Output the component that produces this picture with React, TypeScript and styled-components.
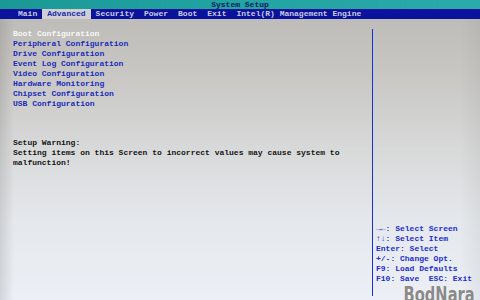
import React from "react";
import styled, { createGlobalStyle } from "styled-components";

const Global = createGlobalStyle`
  html, body { margin: 0; padding: 0; width: 480px; height: 300px; overflow: hidden; }
  body { font-family: "Liberation Mono", "DejaVu Sans Mono", monospace; }
`;

const Screen = styled.div`
  position: relative;
  width: 480px;
  height: 300px;
  overflow: hidden;
  display: flex;
  flex-direction: column;
  background:
    linear-gradient(to right, rgba(90, 90, 90, 0.18) 0px, rgba(90, 90, 90, 0) 14px, rgba(90, 90, 90, 0) 460px, rgba(90, 90, 90, 0.08) 480px),
    linear-gradient(to bottom, #bbb9b5 0%, #c8c7c4 25%, #d8d9d9 50%, #e4e7eb 72%, #ecf0f6 100%);
  font-family: "Liberation Mono", "DejaVu Sans Mono", monospace;
  font-size: 8px;
  font-weight: bold;
  line-height: 10px;
`;

const TitleBar = styled.div`
  height: 9px;
  display: flex;
  align-items: center;
  justify-content: center;
  background: linear-gradient(to right, #1a9896, #22a4a3 50%, #2aaaa9);
  color: #0c1a5c;
  line-height: 9px;
`;

const MenuBar = styled.div`
  height: 10px;
  display: flex;
  align-items: stretch;
  padding-left: 13px;
  background: #0b129c;
`;

const Tab = styled.div<{ $active?: boolean }>`
  padding: 0 5px;
  display: flex;
  align-items: center;
  color: ${(p) => (p.$active ? "#1a2aa8" : "#c9cbe6")};
  background: ${(p) => (p.$active ? "#cfcfd4" : "transparent")};
`;

const Body = styled.div`
  flex: 1;
  display: flex;
`;

const Main = styled.div`
  width: 359px;
  padding: 10px 0 0 13px;
  display: flex;
  flex-direction: column;
`;

const Item = styled.div<{ $selected?: boolean }>`
  color: ${(p) => (p.$selected ? "#f7f7f7" : "#1c2cba")};
  white-space: pre;
`;

const Warning = styled.div`
  margin-top: 29px;
  color: #151515;
  white-space: pre;
`;

const Divider = styled.div`
  width: 1px;
  margin-top: 10px;
  margin-bottom: 4px;
  background: #1c2ed6;
`;

const Help = styled.div`
  flex: 1;
  display: flex;
  flex-direction: column;
  justify-content: flex-end;
  padding: 0 0 16px 3px;
  color: #1c2cd0;
`;

const HelpLine = styled.div`
  white-space: pre;
`;

const Watermark = styled.div`
  position: absolute;
  right: 5px;
  bottom: -6px;
  font-family: "DejaVu Sans", "Liberation Sans", sans-serif;
  font-weight: bold;
  font-size: 21px;
  line-height: 22px;
  color: #8a8a8a;
  transform: scaleX(0.7);
  transform-origin: right bottom;
  text-shadow: 0 0 1px #ffffff, 1px 1px 0 rgba(255, 255, 255, 0.7);
`;

const tabs = ["Main", "Advanced", "Security", "Power", "Boot", "Exit", "Intel(R) Management Engine"];
const items = [
  "Boot Configuration",
  "Peripheral Configuration",
  "Drive Configuration",
  "Event Log Configuration",
  "Video Configuration",
  "Hardware Monitoring",
  "Chipset Configuration",
  "USB Configuration",
];
const help = [
  "\u2192\u2190: Select Screen",
  "\u2191\u2193: Select Item",
  "Enter: Select",
  "+/-: Change Opt.",
  "F9: Load Defaults",
  "F10: Save  ESC: Exit",
];

export default function App() {
  return (
    <>
      <Global />
      <Screen>
        <TitleBar>System Setup</TitleBar>
        <MenuBar>
          {tabs.map((t) => (
            <Tab key={t} $active={t === "Advanced"}>
              {t}
            </Tab>
          ))}
        </MenuBar>
        <Body>
          <Main>
            {items.map((it, i) => (
              <Item key={it} $selected={i === 0}>
                {it}
              </Item>
            ))}
            <Warning>
              {"Setup Warning:\nSetting items on this Screen to incorrect values may cause system to\nmalfunction!"}
            </Warning>
          </Main>
          <Divider />
          <Help>
            {help.map((h) => (
              <HelpLine key={h}>{h}</HelpLine>
            ))}
          </Help>
        </Body>
        <Watermark>BodNara</Watermark>
      </Screen>
    </>
  );
}
